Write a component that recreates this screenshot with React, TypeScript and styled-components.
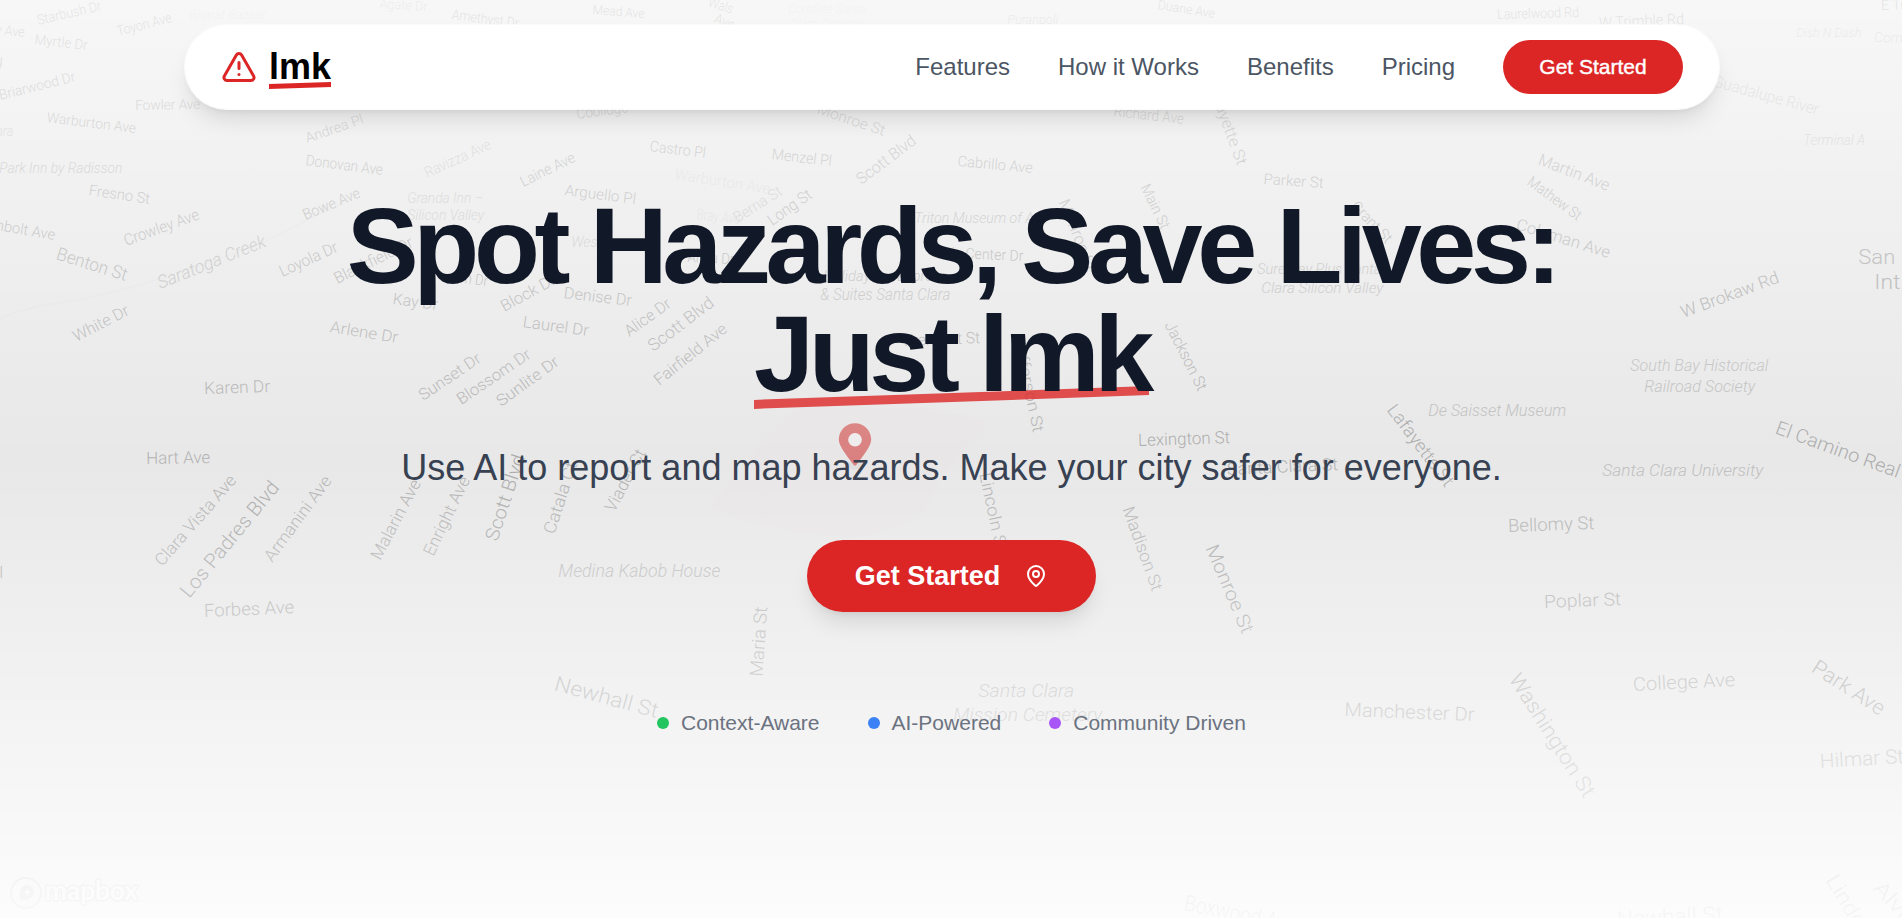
import React from "react";
import styled, { createGlobalStyle } from "styled-components";
import { MapPin, TriangleAlert } from "lucide-react";

const GlobalStyle = createGlobalStyle`
  * { box-sizing: border-box; }
  body {
    margin: 0;
    overflow: hidden;
    font-family: "Liberation Sans", Arial, sans-serif;
    color: #111827;
  }
`;

const Page = styled.div`
  position: relative;
  isolation: isolate;
  height: 918px;
  overflow: hidden;
  display: flex;
  flex-direction: column;
  align-items: center;
  padding-left: 1px;
  background: #e8e8e8;
`;

const MapCanvas = styled.svg`
  position: absolute;
  inset: 0;
  z-index: -2;
  width: 1902px;
  height: 918px;
  font-family: Roboto, sans-serif;
  font-weight: 300;
`;

const Fade = styled.div`
  position: absolute;
  inset: 0;
  z-index: -1;
  background: linear-gradient(
    to bottom,
    rgba(255, 255, 255, 0.66) 0%,
    rgba(255, 255, 255, 0) 50%,
    rgba(255, 255, 255, 0.88) 100%
  );
`;

const Nav = styled.nav`
  display: flex;
  align-items: center;
  justify-content: space-between;
  width: 1536px;
  height: 86px;
  margin-top: 24px;
  margin-left: 1px;
  padding: 0 36px;
  border: 1px solid rgba(255, 255, 255, 0.6);
  border-radius: 43px;
  background: rgba(255, 255, 255, 0.97);
  background-clip: padding-box;
  box-shadow: 0 15px 22.5px -4.5px rgba(0, 0, 0, 0.1),
    0 6px 9px -6px rgba(0, 0, 0, 0.1);
`;

const Brand = styled.div`
  display: flex;
  align-items: center;
  gap: 12px;
  color: #dc2626;
`;

const Underlined = styled.span<{ $thickness: number; $drop: number; $alpha: number }>`
  position: relative;
  display: inline-block;
  &::after {
    content: "";
    position: absolute;
    z-index: -1;
    left: 0;
    right: 0;
    bottom: ${(p) => p.$drop}px;
    height: ${(p) => p.$thickness}px;
    background: #dc2626;
    opacity: ${(p) => p.$alpha};
    transform: skewY(-2deg);
  }
`;

const BrandName = styled.span`
  position: relative;
  z-index: 0;
  font-size: 36px;
  line-height: 42px;
  font-weight: 700;
  color: #000;
`;

const Links = styled.div`
  display: flex;
  align-items: center;
  gap: 48px;
`;

const NavLink = styled.a`
  font-size: 24px;
  line-height: 36px;
  color: #4b5563;
`;

const PillButton = styled.button<{ $large?: boolean }>`
  display: flex;
  align-items: center;
  justify-content: center;
  gap: 24px;
  width: ${(p) => (p.$large ? 289 : 180)}px;
  height: ${(p) => (p.$large ? 72 : 54)}px;
  padding: 0;
  border: 0;
  border-radius: 36px;
  background: #dc2626;
  color: #fff;
  font-family: inherit;
  font-size: ${(p) => (p.$large ? 27 : 21)}px;
  font-weight: ${(p) => (p.$large ? 700 : 400)};
  -webkit-text-stroke: ${(p) => (p.$large ? "0" : "0.4px #fff")};
  box-shadow: ${(p) =>
    p.$large
      ? "0 15px 22.5px -4.5px rgba(0,0,0,.1), 0 6px 9px -6px rgba(0,0,0,.1)"
      : "none"};
`;

const Hero = styled.main`
  display: flex;
  flex-direction: column;
  align-items: center;
  margin-top: 82px;
`;

const Title = styled.h1`
  position: relative;
  z-index: 0;
  margin: 0;
  text-align: center;
  font-size: 108px;
  line-height: 108px;
  font-weight: 700;
  letter-spacing: -5.4px;
  color: #111827;
`;

const Lead = styled.p`
  margin: 33px 0 45px;
  font-size: 36px;
  line-height: 54px;
  color: #374151;
`;

const Traits = styled.ul`
  display: flex;
  gap: 48px;
  margin: 96px 0 0;
  padding: 0;
  list-style: none;
`;

const Trait = styled.li<{ $color: string }>`
  display: flex;
  align-items: center;
  gap: 12px;
  font-size: 21px;
  line-height: 30px;
  color: #6b7280;
  &::before {
    content: "";
    width: 12px;
    height: 12px;
    border-radius: 50%;
    background: ${(p) => p.$color};
  }
`;

type Kind = "road" | "main" | "place" | "faint" | "ghost";
/* text, baseline start x/y, baseline end x/y, font size, kind */
type Label = [string, number, number, number, number, number, Kind?];

const labels: Label[] = [
  ["Starbush Dr", 39, 25, 103, 10, 14],
  ["y Ave", -4, 34, 25, 37, 14],
  ["Toyon Ave", 119, 36, 173, 22, 14],
  ["Bharat Bazaar", 190, 19, 267, 19, 13, "ghost"],
  ["Agate Dr", 380, 8, 428, 11, 13, "faint"],
  ["Amethyst Dr", 452, 19, 519, 28, 14],
  ["Mead Ave", 593, 14, 645, 18, 13],
  ["Myrtle Dr", 35, 44, 88, 50, 14],
  ["y", -2, 66, 5, 64, 14],
  ["Briarwood Dr", 1, 100, 77, 81, 14],
  ["Fowler Ave", 136, 110, 201, 109, 14],
  ["Warburton Ave", 47, 122, 136, 133, 14],
  ["ara", -3, 136, 14, 136, 14, "faint"],
  ["Park Inn by Radisson", 0, 173, 123, 173, 15, "place"],
  ["Fresno St", 89, 195, 150, 204, 15],
  ["mbolt Ave", -9, 229, 55, 240, 15],
  ["Crowley Ave", 127, 246, 201, 219, 16],
  ["Benton St", 56, 259, 126, 281, 18],
  ["Saratoga Creek", 161, 289, 268, 246, 18, "place"],
  ["Andrea Pl", 308, 143, 365, 123, 14],
  ["Donovan Ave", 306, 165, 383, 175, 15],
  ["Ravizza Ave", 428, 178, 493, 148, 15, "faint"],
  ["Laine Ave", 524, 187, 577, 161, 15],
  ["Bowe Ave", 306, 220, 362, 197, 15],
  ["Granda Inn –", 408, 203, 484, 203, 15, "faint"],
  ["Silicon Valley", 408, 220, 485, 220, 15, "faint"],
  ["Arguello Pl", 565, 195, 636, 204, 15],
  ["Loyola Dr", 283, 277, 340, 251, 16],
  ["Blackfield Dr", 338, 284, 415, 246, 16],
  ["n Dr", 465, 283, 488, 286, 15],
  ["Kay Dr", 393, 304, 438, 310, 16],
  ["Block Dr", 505, 312, 558, 283, 16],
  ["Denise Dr", 564, 298, 632, 306, 16],
  ["Wes", 572, 247, 598, 247, 15, "faint"],
  ["Coolidge", 578, 119, 629, 112, 15],
  ["Wals", 708, 6, 732, 14, 14],
  ["Ave", 714, 22, 733, 30, 14],
  ["CoreSite Santa", 789, 13, 867, 13, 13, "ghost"],
  ["Clara Campus", 791, 28, 866, 28, 13, "ghost"],
  ["Puranpoli", 1008, 24, 1059, 24, 13, "faint"],
  ["Duane Ave", 1158, 9, 1215, 18, 13],
  ["Monroe St", 817, 113, 884, 136, 15],
  ["Richard Ave", 1114, 116, 1184, 124, 15],
  ["Lafayette St", 1208, 84, 1238, 166, 16],
  ["Castro Pl", 650, 151, 706, 158, 15],
  ["Menzel Pl", 772, 159, 832, 166, 15],
  ["Scott Blvd", 862, 185, 918, 143, 16],
  ["Cabrillo Ave", 958, 166, 1033, 173, 15],
  ["Warburton Ave", 675, 179, 770, 194, 15, "ghost"],
  ["Berna St", 738, 223, 784, 194, 15, "faint"],
  ["Long St", 773, 226, 814, 197, 16],
  ["Main St", 1141, 187, 1162, 230, 15],
  ["Triton Museum of Art", 915, 223, 1044, 223, 15, "place"],
  ["Monroe St", 1059, 202, 1088, 272, 16],
  ["Bray Ave", 697, 219, 740, 224, 15, "ghost"],
  ["Anna Dr", 688, 262, 735, 264, 15],
  ["Civic Center Dr", 933, 257, 1024, 261, 15],
  ["Holiday Inn Express", 824, 281, 948, 281, 15, "place"],
  ["& Suites Santa Clara", 821, 300, 951, 300, 16, "place"],
  ["Alice Dr", 630, 337, 673, 306, 16],
  ["Scott Blvd", 654, 352, 716, 305, 17],
  ["Fairfield Ave", 660, 386, 729, 331, 16],
  ["Laurelwood Rd", 1498, 19, 1580, 17, 14],
  ["W Trimble Rd", 1600, 28, 1685, 24, 15],
  ["E Tr", 1882, 10, 1906, 9, 14],
  ["Dish N Dash", 1797, 37, 1862, 37, 13, "faint"],
  ["Com", 1875, 42, 1903, 43, 14, "faint"],
  ["Guadalupe River", 1713, 86, 1818, 115, 16, "faint"],
  ["Terminal A", 1804, 145, 1866, 145, 14, "faint"],
  ["Parker St", 1264, 184, 1324, 188, 15],
  ["Martin Ave", 1538, 164, 1608, 191, 16],
  ["Mathew St", 1527, 184, 1578, 221, 15],
  ["Grant St", 1351, 207, 1387, 244, 15],
  ["Coleman Ave", 1516, 229, 1609, 258, 16],
  ["SureStay Plus Santa", 1258, 274, 1382, 274, 15, "place"],
  ["Clara Silicon Valley", 1262, 293, 1384, 293, 15, "place"],
  ["San", 1859, 264, 1896, 264, 21, "main"],
  ["Int", 1875, 289, 1901, 289, 21, "main"],
  ["W Brokaw Rd", 1684, 318, 1781, 282, 17, "main"],
  ["White Dr", 77, 342, 131, 314, 16],
  ["Arlene Dr", 330, 332, 398, 343, 16],
  ["Karen Dr", 205, 394, 271, 392, 17],
  ["Laurel Dr", 523, 327, 589, 336, 16],
  ["Sunset Dr", 424, 401, 483, 361, 16],
  ["Blossom Dr", 462, 405, 533, 357, 16],
  ["Sunlite Dr", 502, 407, 561, 364, 16],
  ["Hart Ave", 147, 464, 211, 463, 17],
  ["Clara Vista Ave", 163, 567, 238, 481, 17],
  ["Los Padres Blvd", 190, 599, 281, 488, 20, "main"],
  ["Armanini Ave", 273, 563, 333, 481, 17],
  ["Malarin Ave", 381, 561, 422, 483, 17],
  ["Enright Ave", 434, 557, 471, 480, 17],
  ["Scott Blvd", 498, 542, 526, 457, 19, "main"],
  ["Catala Ct", 555, 535, 578, 464, 17],
  ["Viader Ct", 615, 513, 647, 453, 17],
  ["l", 0, 578, 4, 578, 17],
  ["Medina Kabob House", 559, 577, 721, 577, 18, "place"],
  ["Forbes Ave", 205, 617, 295, 613, 18],
  ["Jefferson St", 1014, 338, 1034, 433, 16],
  ["Jackson St", 1165, 325, 1199, 392, 16],
  ["Fremont St", 905, 346, 981, 343, 16],
  ["Lexington St", 1139, 446, 1231, 443, 17, "main"],
  ["Santa Clara St", 1228, 475, 1339, 470, 17],
  ["Lincoln St", 980, 474, 997, 553, 17],
  ["Madison St", 1123, 509, 1153, 592, 17],
  ["Monroe St", 1206, 548, 1243, 635, 19, "main"],
  ["Lafayette St", 1387, 410, 1446, 488, 18, "main"],
  ["De Saisset Museum", 1429, 416, 1567, 416, 17, "place"],
  ["South Bay Historical", 1631, 371, 1769, 371, 17, "place"],
  ["Railroad Society", 1645, 392, 1756, 392, 17, "place"],
  ["El Camino Real", 1775, 433, 1898, 478, 19, "main"],
  ["Santa Clara University", 1603, 476, 1764, 476, 17, "place"],
  ["Bellomy St", 1509, 532, 1595, 529, 18],
  ["Poplar St", 1545, 608, 1622, 605, 18],
  ["Newhall St", 554, 690, 657, 718, 21],
  ["Maria St", 763, 677, 768, 607, 18],
  ["Santa Clara", 979, 697, 1075, 697, 19, "place"],
  ["Mission Cemetery", 954, 721, 1103, 721, 19, "place"],
  ["Boxwood Ave", 1184, 910, 1295, 932, 22],
  ["Manchester Dr", 1345, 716, 1475, 721, 19],
  ["Washington St", 1509, 679, 1585, 799, 21],
  ["College Ave", 1634, 691, 1736, 686, 19],
  ["Park Ave", 1811, 671, 1880, 716, 21, "main"],
  ["Hilmar St", 1821, 768, 1905, 763, 20],
  ["Linden", 1826, 880, 1862, 940, 21],
  ["Alviso", 1873, 889, 1920, 940, 21],
  ["Newhall St", 1618, 926, 1724, 921, 21],
];

const tone: Record<Kind, string> = {
  road: "#b3b3b3",
  main: "#acacac",
  place: "#bebebe",
  faint: "#c8c8c8",
  ghost: "#dadada",
};

const MapLabel = ({ label }: { label: Label }) => {
  const [text, x1, y1, x2, y2, size, kind = "road"] = label;
  const angle = (Math.atan2(y2 - y1, x2 - x1) * 180) / Math.PI;
  const straight = y1 === y2 && kind !== "main" && text.length > 2;
  return (
    <text
      transform={`translate(${x1} ${y1}) rotate(${angle.toFixed(2)})`}
      textLength={Math.hypot(x2 - x1, y2 - y1).toFixed(1)}
      lengthAdjust="spacingAndGlyphs"
      fontSize={size}
      fontStyle={straight ? "italic" : kind === "place" ? "italic" : "normal"}
      fill={tone[kind]}
    >
      {text}
    </text>
  );
};

const MapBackdrop = () => (
  <MapCanvas viewBox="0 0 1902 918" aria-hidden="true">
    <path
      d="M0 319Q25 306 80 300Q170 280 268 240Q310 218 345 202"
      fill="none"
      stroke="#e4e4e4"
      strokeWidth="1.5"
    />
    <path
      d="M710 508Q760 440 800 405Q850 385 990 423Q940 470 925 510Q890 535 850 537Q780 535 710 508Z"
      fill="#ef4444"
      opacity="0.01"
    />
    <g transform="translate(-0.7 0)">
      {labels.map((label, i) => (
        <MapLabel key={i} label={label} />
      ))}
    </g>
    <g transform="translate(838.8 423.3) scale(1.2)">
      <ellipse cx="13.5" cy="34.8" rx="7" ry="4" fill="#000" opacity="0.035" />
      <path
        d="M27 13.5C27 19.07 20.25 27 14.75 34.5C14.02 35.5 12.98 35.5 12.25 34.5C6.75 27 0 19.22 0 13.5C0 6.04 6.04 0 13.5 0C20.96 0 27 6.04 27 13.5Z"
        fill="#da8080"
      />
      <circle cx="13.5" cy="13.7" r="5.7" fill="#eeecec" />
    </g>
    <g transform="translate(26 893)">
      <circle r="15" fill="none" stroke="#b8b8b8" strokeWidth="1.8" opacity="0.7" />
      <path
        d="M-6 7C-7 0-6-8 1-8C6-8 8-4 8-1C8 5 2 8-6 7Z"
        fill="#b8b8b8"
        opacity="0.65"
      />
      <path d="M1.5-5L2.7-2.2L5.5-1L2.7.2L1.5 3L.3.2L-2.5-1L.3-2.2Z" fill="#eee" />
      <text
        x="19"
        y="7"
        fontFamily="Lato, sans-serif"
        fontSize="26"
        fontWeight="700"
        textLength="93"
        lengthAdjust="spacingAndGlyphs"
        fill="#f0f0f0"
        stroke="#c6c6c6"
        strokeWidth="3"
        strokeLinejoin="round"
        paintOrder="stroke"
      >
        mapbox
      </text>
    </g>
  </MapCanvas>
);

const navLinks = ["Features", "How it Works", "Benefits", "Pricing"];

const traits = [
  { text: "Context-Aware", color: "#22c55e" },
  { text: "AI-Powered", color: "#3b82f6" },
  { text: "Community Driven", color: "#a855f7" },
];

export default function App() {
  return (
    <Page>
      <GlobalStyle />
      <MapBackdrop />
      <Fade />
      <Nav>
        <Brand>
          <TriangleAlert size={36} />
          <BrandName>
            <Underlined $thickness={4.5} $drop={0.5} $alpha={1}>
              lmk
            </Underlined>
          </BrandName>
        </Brand>
        <Links>
          {navLinks.map((link) => (
            <NavLink key={link}>{link}</NavLink>
          ))}
          <PillButton>Get Started</PillButton>
        </Links>
      </Nav>
      <Hero>
        <Title>
          Spot Hazards, Save Lives:
          <br />
          <Underlined $thickness={9} $drop={6} $alpha={0.8}>
            Just lmk
          </Underlined>
        </Title>
        <Lead>Use AI to report and map hazards. Make your city safer for everyone.</Lead>
        <PillButton $large>
          Get Started
          <MapPin size={24} />
        </PillButton>
        <Traits>
          {traits.map((t) => (
            <Trait key={t.text} $color={t.color}>
              {t.text}
            </Trait>
          ))}
        </Traits>
      </Hero>
    </Page>
  );
}
